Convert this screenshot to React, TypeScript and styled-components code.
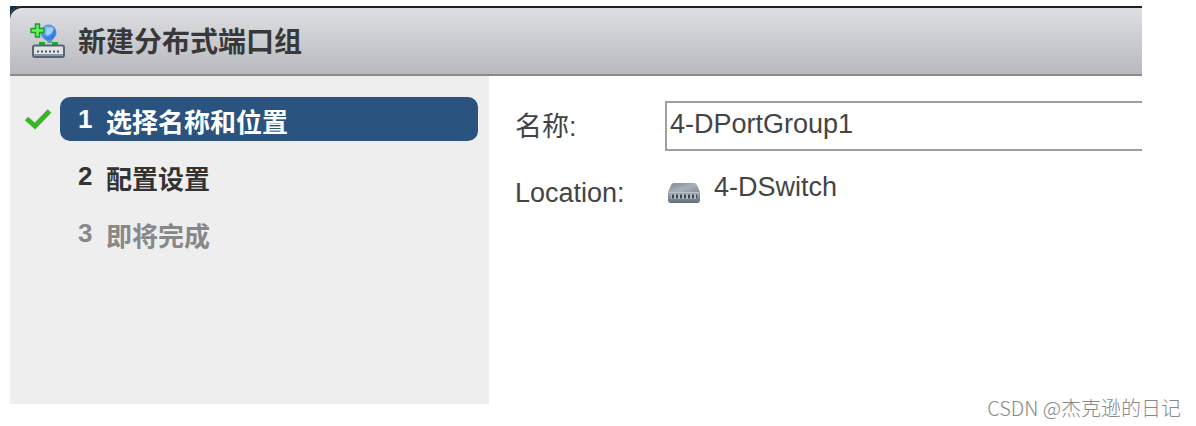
import React from "react";
import styled, { createGlobalStyle } from "styled-components";

const GlobalStyle = createGlobalStyle`
  *, *::before, *::after { box-sizing: border-box; }
  body {
    margin: 0;
    background: #fff;
    color: #3c3c3c;
    font-family: "Liberation Sans", "Noto Sans CJK SC", sans-serif;
  }
`;

const Page = styled.div`
  position: relative;
  padding: 6px 54px 22px 10px;
`;

const Dialog = styled.section`
  background: linear-gradient(90deg, #16384f, #000 24px) top / 100% 20px no-repeat;
`;

const Header = styled.header`
  display: flex;
  align-items: center;
  gap: 12px;
  height: 70px;
  padding: 2px 20px 0;
  border-bottom: 2px solid #8b8b8e;
  border-top-left-radius: 12px;
  background: linear-gradient(#dfe0e4, #b8b9be);
  box-shadow: inset 0 2px #1c2022;
`;

const Title = styled.h1`
  margin: 0;
  padding-top: 4px;
  font-size: 28px;
  line-height: 40px;
  font-weight: 700;
  color: #383838;
`;

const Body = styled.div`
  display: flex;
  min-height: 328px;
`;

const Sidebar = styled.nav`
  flex: 0 0 479px;
  padding: 21px 11px 20px 14px;
  background: #eee;
`;

const Steps = styled.ol`
  display: flex;
  flex-direction: column;
  gap: 13px;
  margin: 0;
  padding: 0;
  list-style: none;
`;

const Step = styled.li`
  display: grid;
  grid-template-columns: 28px 1fr;
  column-gap: 8px;
  align-items: center;
`;

type StepState = "current" | "next" | "disabled";

const stepColors: Record<StepState, string> = {
  current: "#fff",
  next: "#333",
  disabled: "#888",
};

const StepButton = styled.button<{ $state: StepState }>`
  grid-column: 2;
  display: flex;
  align-items: center;
  gap: 14px;
  height: 44px;
  padding: 2px 18px 0;
  border: 0;
  border-radius: 10px;
  background: ${(p) => (p.$state === "current" ? "#2a547f" : "transparent")};
  color: ${(p) => stepColors[p.$state]};
  font-family: inherit;
  font-size: 26px;
  font-weight: 700;
  line-height: 32px;
  text-align: left;
`;

const StepNumber = styled.span`
  width: 14px;
  padding-bottom: 2px;
  font-size: 26px;
  line-height: 28px;
`;

const StepLabel = styled.span`
  padding-top: 6px;
`;

const Form = styled.form`
  flex: 1;
  min-width: 0;
  display: grid;
  grid-template-columns: 150px 1fr;
  grid-auto-rows: 50px;
  row-gap: 16px;
  align-content: start;
  align-items: center;
  padding: 25px 0 0 26px;
  background: #fff;
  font-size: 27px;
`;

const Label = styled.label`
  padding-top: 2px;
  font-size: 27px;
  line-height: 40px;
  color: #444;
`;

const NameInput = styled.input`
  width: 100%;
  height: 50px;
  padding: 0 4px 4px 3px;
  border: 2px solid #a0a0a0;
  border-right: 0;
  background: #fff;
  color: #444;
  font-family: inherit;
  font-size: 27px;
  outline: 0;
`;

const Location = styled.output`
  display: flex;
  align-items: center;
  gap: 13px;
  padding: 0 0 10px 2px;
  line-height: 32px;
  color: #444;

  svg { margin-top: 12px; }
`;

const Watermark = styled.footer`
  position: absolute;
  right: 15px;
  bottom: 4px;
  font-family: "Noto Sans CJK SC", sans-serif;
  font-size: 20px;
  font-weight: 300;
  line-height: 28px;
  color: #888;
`;

const PortGroupIcon = () => (
  <svg width="36" height="36" viewBox="0 0 36 36" aria-hidden="true">
    <defs>
      <radialGradient id="globe" cx="0.35" cy="0.3" r="0.8">
        <stop offset="0" stopColor="#8cc4ff" />
        <stop offset="1" stopColor="#1b63cf" />
      </radialGradient>
    </defs>
    <path d="M15 15h9l-3 5h-3z" fill="#6b93c4" />
    <circle cx="18.500" cy="9.500" r="7.500" fill="url(#globe)" stroke="#4b8de0" />
    <path d="M17 5l5-1 2 2-3 5-4 2-2-3 2-1z" fill="#b6dcff" opacity=".75" />
    <path d="M9 19h6v3H9zM22 19h6v3h-6z" fill="#0db51b" />
    <rect x="3" y="22.500" width="31" height="11.500" rx="2" fill="#e0e4e8" stroke="#566474" strokeWidth="2" />
    <path d="M4 31h29v2H4z" fill="#8c98a5" />
    <path d="M7 28.500h24" stroke="#4e5965" strokeWidth="2" strokeDasharray="2 2" />
    <path d="M5.500 1h4v4.500H14v4H9.500V14h-4V9.500H1v-4h4.500z" fill="#69ed64" stroke="#1e9e25" strokeWidth="1.500" strokeLinejoin="round" />
  </svg>
);

const SwitchIcon = () => (
  <svg width="34" height="22" viewBox="0 0 34 22" aria-hidden="true">
    <defs>
      <linearGradient id="switchTop" x1="0" y1="0" x2="1" y2="1">
        <stop offset="0" stopColor="#7d8791" />
        <stop offset="0.5" stopColor="#a8b1ba" />
        <stop offset="1" stopColor="#7d8791" />
      </linearGradient>
      <linearGradient id="switchFront" x1="0" y1="0" x2="0" y2="1">
        <stop offset="0" stopColor="#a3adb6" />
        <stop offset="1" stopColor="#626d78" />
      </linearGradient>
    </defs>
    <path d="M7 1h20q2 0 3 2l3 7v2H1v-2l3-7q1-2 3-2z" fill="url(#switchTop)" />
    <path d="M1 10h32v8q0 3-3 3H4q-3 0-3-3z" fill="url(#switchFront)" />
    <path d="M2 10.500h30" stroke="#bdc5cc" />
    <path d="M4 12h26v5H4z" fill="#b4bcc3" />
    <path d="M5 14.500h25" stroke="#3f474f" strokeWidth="4" strokeDasharray="2 2" />
  </svg>
);

const CheckIcon = () => (
  <svg width="28" height="22" viewBox="0 0 28 22" role="img" aria-label="已完成">
    <path d="M2.500 10.500L11 18 25.500 3" fill="none" stroke="#3db32c" strokeWidth="5" />
  </svg>
);

const steps: { label: string; state: StepState; done?: boolean }[] = [
  { label: "选择名称和位置", state: "current", done: true },
  { label: "配置设置", state: "next" },
  { label: "即将完成", state: "disabled" },
];

export default function App() {
  return (
    <Page>
      <GlobalStyle />
      <Dialog>
        <Header>
          <PortGroupIcon />
          <Title>新建分布式端口组</Title>
        </Header>
        <Body>
          <Sidebar>
            <Steps>
              {steps.map((step, i) => (
                <Step key={step.label}>
                  {step.done && <CheckIcon />}
                  <StepButton type="button" $state={step.state} disabled={step.state === "disabled"}>
                    <StepNumber>{i + 1}</StepNumber>
                    <StepLabel>{step.label}</StepLabel>
                  </StepButton>
                </Step>
              ))}
            </Steps>
          </Sidebar>
          <Form>
            <Label htmlFor="name">名称:</Label>
            <NameInput id="name" type="text" defaultValue="4-DPortGroup1" />
            <Label htmlFor="location">Location:</Label>
            <Location id="location">
              <SwitchIcon />
              4-DSwitch
            </Location>
          </Form>
        </Body>
      </Dialog>
      <Watermark>CSDN @杰克逊的日记</Watermark>
    </Page>
  );
}
